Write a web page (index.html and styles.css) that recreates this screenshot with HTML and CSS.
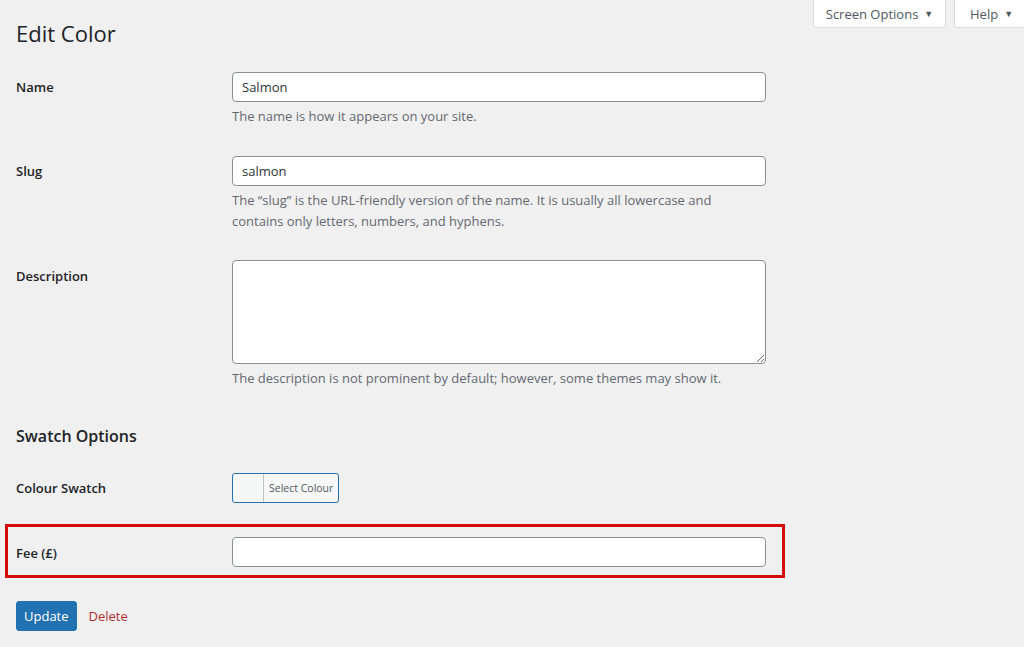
FILE: index.html
```html
<!DOCTYPE html>
<html lang="en">
  <head>
    <meta charset="UTF-8" />
    <title>Edit Color</title>
    <link rel="stylesheet" href="styles.css">
  </head>
  <body>
    <div class="screen-meta">
      <button class="meta-btn meta-options">Screen Options <span class="caret">&#9660;</span></button>
      <button class="meta-btn meta-help">Help <span class="caret">&#9660;</span></button>
    </div>

    <div class="wrap">
      <h1>Edit Color</h1>

      <form class="edit-form">
        <div class="form-row row-name">
          <label for="name">Name</label>
          <div class="field">
            <input type="text" id="name" class="input-field" value="Salmon" />
            <p class="description">The name is how it appears on your site.</p>
          </div>
        </div>

        <div class="form-row row-slug">
          <label for="slug">Slug</label>
          <div class="field">
            <input type="text" id="slug" class="input-field" value="salmon" />
            <p class="description">
              The “slug” is the URL-friendly version of the name. It is usually all lowercase and
              contains only letters, numbers, and hyphens.
            </p>
          </div>
        </div>

        <div class="form-row row-desc">
          <label for="description">Description</label>
          <div class="field">
            <textarea id="description" class="input-field textarea"></textarea>
            <p class="description">The description is not prominent by default; however, some themes may show it.</p>
          </div>
        </div>

        <h2>Swatch Options</h2>

        <div class="form-row row-swatch">
          <label>Colour Swatch</label>
          <div class="field">
            <button type="button" class="color-picker">
              <span class="color-preview"></span>
              <span class="color-text">Select Colour</span>
            </button>
          </div>
        </div>

        <div class="highlight">
          <div class="form-row row-fee">
            <label for="fee">Fee (£)</label>
            <div class="field">
              <input type="text" id="fee" class="input-field" />
            </div>
          </div>
        </div>

        <div class="actions">
          <button type="button" class="btn-primary">Update</button>
          <a href="#" class="delete-link">Delete</a>
        </div>
      </form>
    </div>
  </body>
</html>
```

FILE: styles.css
```css
body {
  font-family: "Open Sans", "Noto Sans", Arial, sans-serif;
  font-size: 13px;
  margin: 0;
  background-color: #f0f0f1;
  color: #1d2327;
  overflow: hidden;
}

.screen-meta {
  display: flex;
  justify-content: flex-end;
  gap: 8px;
  margin-right: -14px;
  height: 0;
}

.meta-btn {
  font-family: inherit;
  font-size: 13px;
  color: #50575e;
  background-color: #ffffff;
  border: 1px solid #dcdcde;
  border-top: none;
  border-radius: 0 0 4px 4px;
  height: 28px;
  padding: 0 15px;
  display: flex;
  align-items: center;
  gap: 6px;
  white-space: nowrap;
  flex-shrink: 0;
}

.meta-options {
  width: 133px;
  justify-content: center;
}

.meta-help {
  width: 84px;
  justify-content: flex-start;
}

.caret {
  font-size: 9px;
  color: #50575e;
}

.wrap {
  padding: 0 16px;
}

h1 {
  font-size: 22px;
  font-weight: 400;
  margin: 0;
  padding: 19px 0 0;
  line-height: 29px;
}

.edit-form {
  margin-top: 12px;
}

.form-row {
  display: grid;
  grid-template-columns: 216px 534px;
  padding: 12px 0 17px;
}

.form-row label {
  font-weight: 600;
  font-size: 13px;
  padding-top: 6px;
}

.row-desc {
  padding-top: 11px;
}

.row-desc label {
  padding-top: 7px;
}

.input-field {
  box-sizing: border-box;
  width: 100%;
  height: 30px;
  border: 1px solid #8c8f94;
  border-radius: 4px;
  background-color: #ffffff;
  color: #2c3338;
  font-family: inherit;
  font-size: 13px;
  padding: 0 9px;
  margin: 0;
}

.textarea {
  height: 104px;
  resize: vertical;
  display: block;
}

.description {
  margin: 4px 0 0;
  color: #646970;
  font-size: 13px;
  line-height: 21px;
}

h2 {
  font-size: 16px;
  font-weight: 600;
  margin: 19px 0 14px;
}

.color-picker {
  display: flex;
  height: 30px;
  padding: 0;
  border: 1px solid #2271b1;
  border-radius: 3px;
  background-color: #f6f7f7;
  overflow: hidden;
  font-family: inherit;
}

.color-preview {
  width: 30px;
  height: 100%;
  border-right: 1px solid #c3c4c7;
}

.color-text {
  font-size: 10.5px;
  color: #50575e;
  padding: 0 5px;
  line-height: 28px;
}

.highlight {
  border: 3px solid #d40c0c;
  margin: 4px 0 0 -11px;
  padding-left: 8px;
  width: 766px;
}

.row-fee {
  padding: 10px 0 8px;
}

.row-fee label {
  padding-top: 7px;
}

.actions {
  display: flex;
  align-items: center;
  gap: 12px;
  margin-top: 23px;
}

.btn-primary {
  font-family: inherit;
  font-size: 13px;
  background-color: #2271b1;
  color: #ffffff;
  border: 1px solid #2271b1;
  border-radius: 3px;
  height: 30px;
  padding: 0 7px;
  cursor: pointer;
}

.delete-link {
  color: #b32d2e;
  text-decoration: none;
  font-size: 13px;
}
```
